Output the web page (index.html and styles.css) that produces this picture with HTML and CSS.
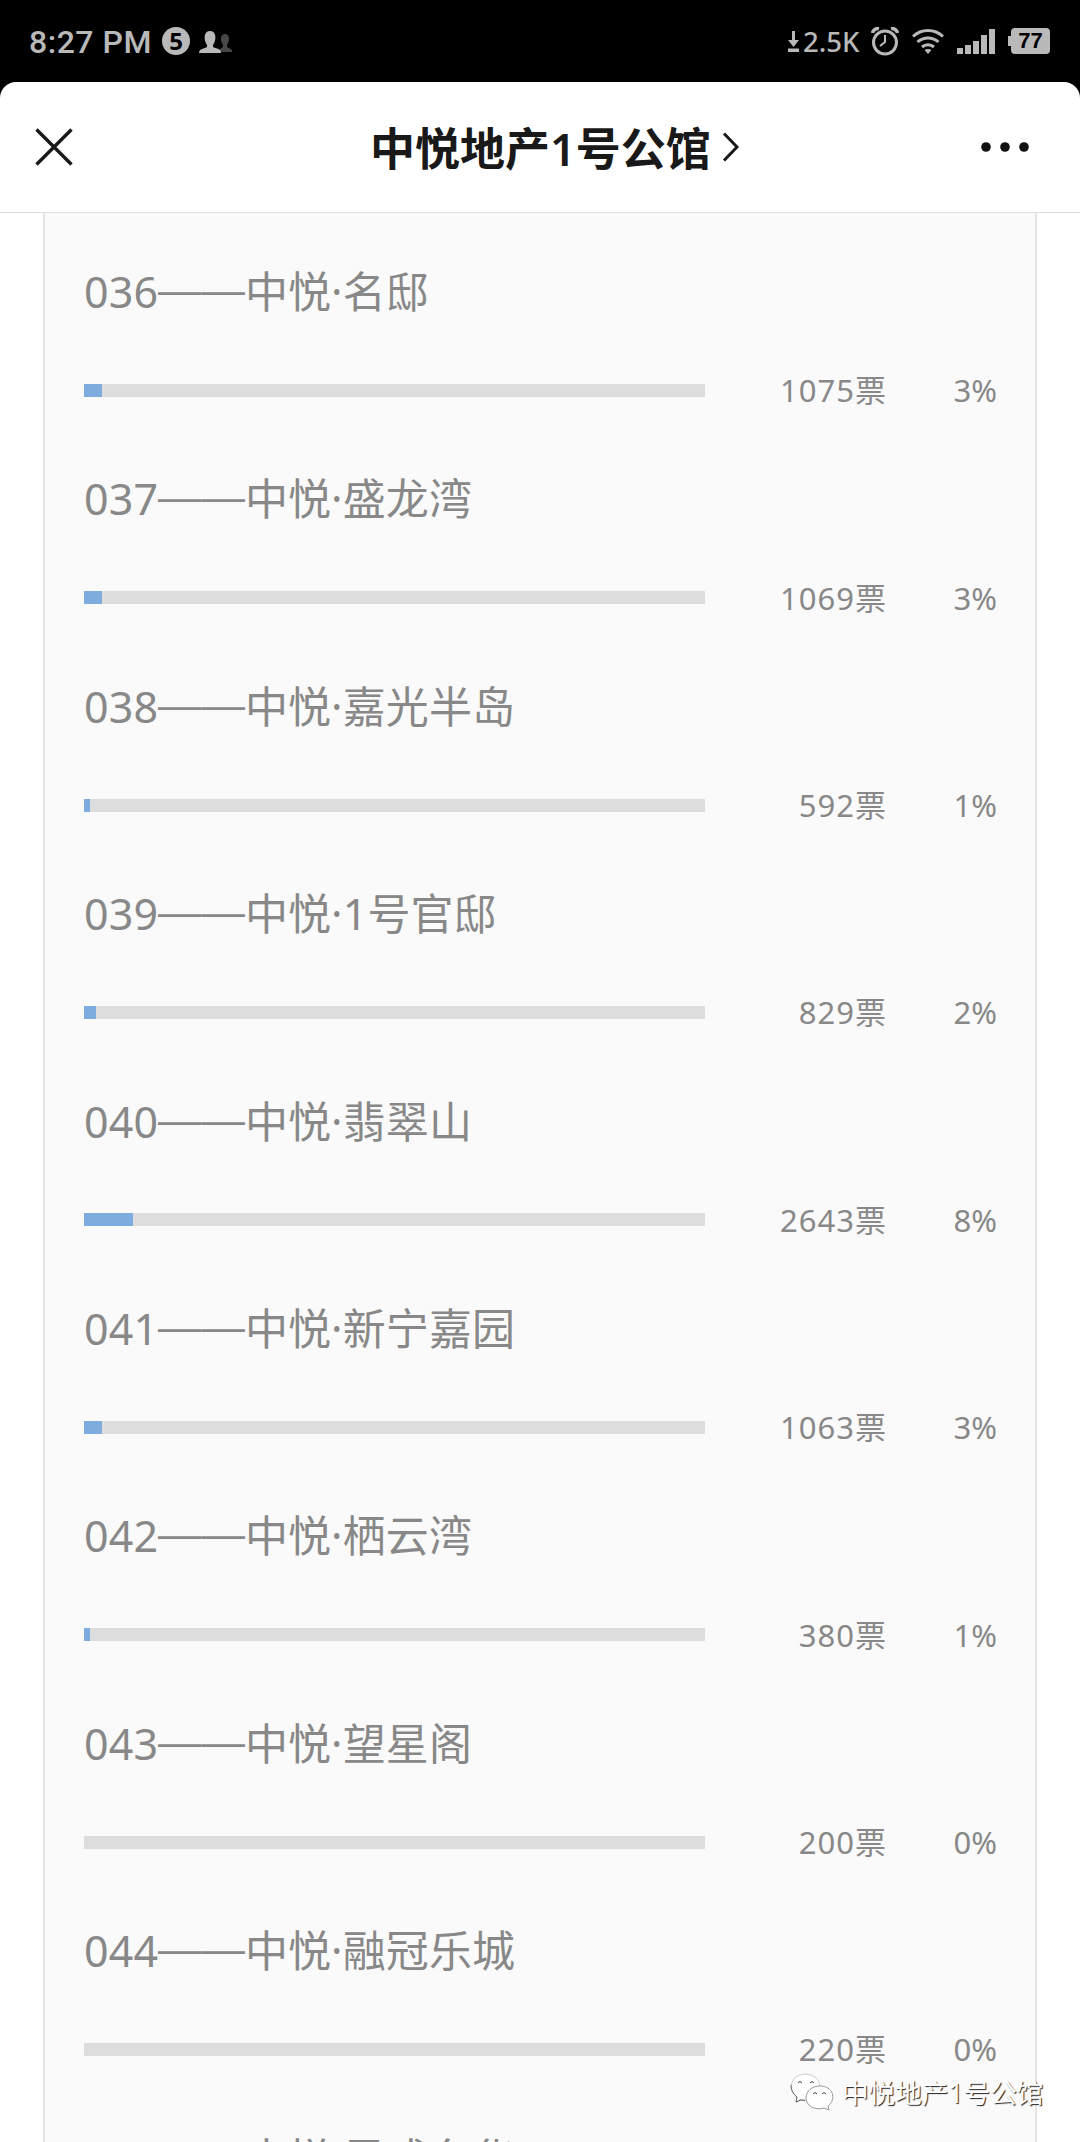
FILE: index.html
```html
<!DOCTYPE html>
<html lang="zh-CN">
<head>
    <meta charset="UTF-8">
    <meta name="viewport" content="width=device-width, initial-scale=1.0">
    <title>中悦地产1号公馆</title>
    <link rel="stylesheet" href="styles.css">
</head>
<body>
    <div class="status-bar">
        <span class="time">8:27 PM</span>
        <span class="badge">5</span>
        <svg class="people" width="34" height="24" viewBox="0 0 34 24">
            <path fill="#484848" d="M21 23v-3l3-2v-2c-3-4-3-11 2-11s5 7 2 11v2c4 2 5 2 5 5z"/>
            <path fill="#b9b9b9" d="M0 24c0-4 4-4 8-6v-2C4 10 5 2 11 2s7 8 3 14v2c5 2 8 2 8 6z"/>
        </svg>
        <div class="status-right">
            <svg class="down" width="11" height="21" viewBox="0 0 11 21" fill="#b9b9b9">
                <path d="M4 0h3v9h4l-5.500 7L0 9h4zM0 17.500h11V21H0z"/>
            </svg>
            <span class="speed">2.5K</span>
            <svg class="alarm" width="28" height="29" viewBox="0 0 28 29" fill="none" stroke="#b9b9b9">
                <circle cx="14" cy="15.500" r="11.500" stroke-width="3"/>
                <path d="M14 8v7l-5 4" stroke-width="2"/>
                <path d="M1.500 6C2 3 5 1 8 1.500M26.500 6c-.5-3-3.500-5-6.500-4.500" stroke-width="3.500"/>
            </svg>
            <svg class="wifi" width="32" height="26" viewBox="0 0 32 26" fill="none" stroke="#b9b9b9" stroke-width="3">
                <path d="M1 8.500c8.500-8 21.500-8 30 0M5.500 14c6-5.500 15-5.500 21 0M10 19c3.500-3 8.500-3 12 0"/>
                <path d="M12.500 22q3.500-2 7 0L16 26z" fill="#b9b9b9" stroke="none"/>
            </svg>
            <svg class="signal" width="38" height="25" viewBox="0 0 38 25" fill="#b9b9b9">
                <path d="M0 19h6v6H0zM8 16h6v9H8zM16 12h6v13h-6zM24 6h6v19h-6zM32 0h6v25h-6z"/>
            </svg>
            <span class="battery">77</span>
        </div>
    </div>
    <div class="page">
        <div class="header">
            <svg width="38" height="38" viewBox="0 0 38 38" stroke="#191919" stroke-width="3.400">
                <path d="M1.500 1.500l35 35M36.500 1.500l-35 35"/>
            </svg>
            <h1>中悦地产1号公馆
                <svg width="18" height="30" viewBox="0 0 18 30" fill="none" stroke="#191919" stroke-width="3">
                    <path d="M2 1.500L15 15 2 28.500"/>
                </svg>
            </h1>
            <svg width="48" height="10" viewBox="0 0 48 10" fill="#111">
                <circle cx="5" cy="5" r="4.800"/>
                <circle cx="24" cy="5" r="4.800"/>
                <circle cx="43" cy="5" r="4.800"/>
            </svg>
        </div>
        <div class="votes">
            <div class="vote">
                <div class="name">036<span class="dash">——</span>中悦·名邸</div>
                <div class="result"><div class="bar"><div class="fill" style="width: 2.9%"></div></div><span class="count">1075<i>票</i></span><span class="percent">3%</span></div>
            </div>
            <div class="vote">
                <div class="name">037<span class="dash">——</span>中悦·盛龙湾</div>
                <div class="result"><div class="bar"><div class="fill" style="width: 2.9%"></div></div><span class="count">1069<i>票</i></span><span class="percent">3%</span></div>
            </div>
            <div class="vote">
                <div class="name">038<span class="dash">——</span>中悦·嘉光半岛</div>
                <div class="result"><div class="bar"><div class="fill" style="width: 1%"></div></div><span class="count">592<i>票</i></span><span class="percent">1%</span></div>
            </div>
            <div class="vote">
                <div class="name">039<span class="dash">——</span>中悦·1号官邸</div>
                <div class="result"><div class="bar"><div class="fill" style="width: 2%"></div></div><span class="count">829<i>票</i></span><span class="percent">2%</span></div>
            </div>
            <div class="vote">
                <div class="name">040<span class="dash">——</span>中悦·翡翠山</div>
                <div class="result"><div class="bar"><div class="fill" style="width: 7.9%"></div></div><span class="count">2643<i>票</i></span><span class="percent">8%</span></div>
            </div>
            <div class="vote">
                <div class="name">041<span class="dash">——</span>中悦·新宁嘉园</div>
                <div class="result"><div class="bar"><div class="fill" style="width: 2.9%"></div></div><span class="count">1063<i>票</i></span><span class="percent">3%</span></div>
            </div>
            <div class="vote">
                <div class="name">042<span class="dash">——</span>中悦·栖云湾</div>
                <div class="result"><div class="bar"><div class="fill" style="width: 1%"></div></div><span class="count">380<i>票</i></span><span class="percent">1%</span></div>
            </div>
            <div class="vote">
                <div class="name">043<span class="dash">——</span>中悦·望星阁</div>
                <div class="result"><div class="bar"></div><span class="count">200<i>票</i></span><span class="percent">0%</span></div>
            </div>
            <div class="vote">
                <div class="name">044<span class="dash">——</span>中悦·融冠乐城</div>
                <div class="result"><div class="bar"></div><span class="count">220<i>票</i></span><span class="percent">0%</span></div>
            </div>
            <div class="vote">
                <div class="name">045<span class="dash">——</span>中悦·凤成名华</div>
            </div>
        </div>
    </div>
    <div class="watermark">
        <svg width="44" height="40" viewBox="0 0 44 40" fill="#fff" stroke="#999" stroke-width="1">
            <path d="M6 29l1-5C-3 15 1 2 15 1c9 0 15 6 15 13S23 27 14 27l-4-.500z" stroke="#ccc"/>
            <path d="M6 29l1-5C2 20 1 16 1 12M6 29l5-2 4 .500" fill="none" stroke="#666"/>
            <path d="M39 37l-5-2C24 38 16 32 16 25s6-12 14-12c13 0 17 13 8 20z"/>
            <path d="M8 10q2-3 4 0M20 10q2-3 4 0M23 21q2-3 4 0M32 21q2-3 4 0" fill="none" stroke="#444"/>
        </svg>
        <span>中悦地产1号公馆</span>
    </div>
</body>
</html>
```

FILE: styles.css
```css
* { box-sizing: border-box; }
body {
    margin: 0;
    height: 2142px;
    overflow: hidden;
    position: relative;
    background: #000;
    font-family: "Noto Sans", "Noto Sans CJK SC", sans-serif;
    display: flex;
    flex-direction: column;
}
.status-bar {
    height: 82px;
    flex: none;
    display: flex;
    align-items: center;
    padding: 0 30px 0 29px;
    color: #b9b9b9;
}
.time {
    font-family: Roboto, sans-serif;
    font-size: 32px;
    font-weight: 500;
    letter-spacing: 0.5px;
    line-height: 36px;
    padding-top: 2px;
    width: 133px;
    white-space: nowrap;
}
.badge {
    width: 28px;
    height: 28px;
    border-radius: 50%;
    background: #b9b9b9;
    color: #000;
    font: bold 24px/28px "Noto Sans", sans-serif;
    text-align: center;
}
.people { margin-left: 9px; }
.status-right {
    margin-left: auto;
    display: flex;
    align-items: center;
}
.speed {
    font-size: 27.5px;
    font-weight: 500;
    width: 56px;
    margin: 0 12px 0 4px;
    white-space: nowrap;
}
.wifi { margin-left: 13px; }
.signal { margin-left: 13px; }
.battery {
    position: relative;
    width: 39px;
    height: 26px;
    margin-left: 16px;
    border-radius: 4px;
    background: #b9b9b9;
    color: #000;
    font: bold 22px/26px "Liberation Sans", sans-serif;
    text-align: center;
}
.battery::before {
    content: "";
    position: absolute;
    left: -3px;
    top: 8px;
    width: 4px;
    height: 10px;
    background: #b9b9b9;
}
.page {
    flex: 1;
    min-height: 0;
    background: #fff;
    border-radius: 16px 16px 0 0;
    overflow: hidden;
}
.header {
    height: 131px;
    padding: 0 51px 0 35px;
    display: flex;
    align-items: center;
    border-bottom: 1px solid #ddd;
}
.header h1 {
    margin: 0 auto 0 297px;
    padding-top: 3px;
    display: flex;
    align-items: center;
    gap: 11px;
    font-size: 45px;
    line-height: 60px;
    font-weight: 600;
    color: #191919;
}
.header h1 svg { margin-bottom: 3px; }
.votes {
    margin: 0 43px;
    padding: 0 38px 0 39px;
    height: 1929px;
    background: #fafafa;
    border: solid #e5e5e5;
    border-width: 0 2px;
}
.vote {
    height: 207.4px;
    padding-top: 49px;
}
.name {
    height: 60px;
    line-height: 60px;
    font-size: 43px;
    letter-spacing: 0.1px;
    color: #888;
    white-space: nowrap;
}
/* Liberation's dash is a full em wide, so two of them join up into one line */
.dash {
    font-family: "Liberation Sans", sans-serif;
    font-size: 43.4px;
    line-height: 1;
    letter-spacing: 0;
    vertical-align: 4px;
}
.result {
    display: flex;
    align-items: center;
    height: 40px;
    margin-top: 48.3px;
    line-height: 40px;
    font-size: 31px;
    color: #888;
}
.bar {
    width: 621px;
    height: 13px;
    background: #ddd;
}
.fill {
    height: 13px;
    background: #7eacde;
}
.count {
    width: 181px;
    text-align: right;
    letter-spacing: 1px;
}
.count i {
    font-style: normal;
    letter-spacing: 0;
}
.percent {
    flex: 1;
    text-align: right;
}
.watermark {
    position: absolute;
    left: 790px;
    top: 2073px;
    display: flex;
    align-items: center;
    gap: 8px;
    color: #fff;
    font-size: 26.6px;
    line-height: 40px;
    text-shadow: 1px 1px 1px #222;
}
```
